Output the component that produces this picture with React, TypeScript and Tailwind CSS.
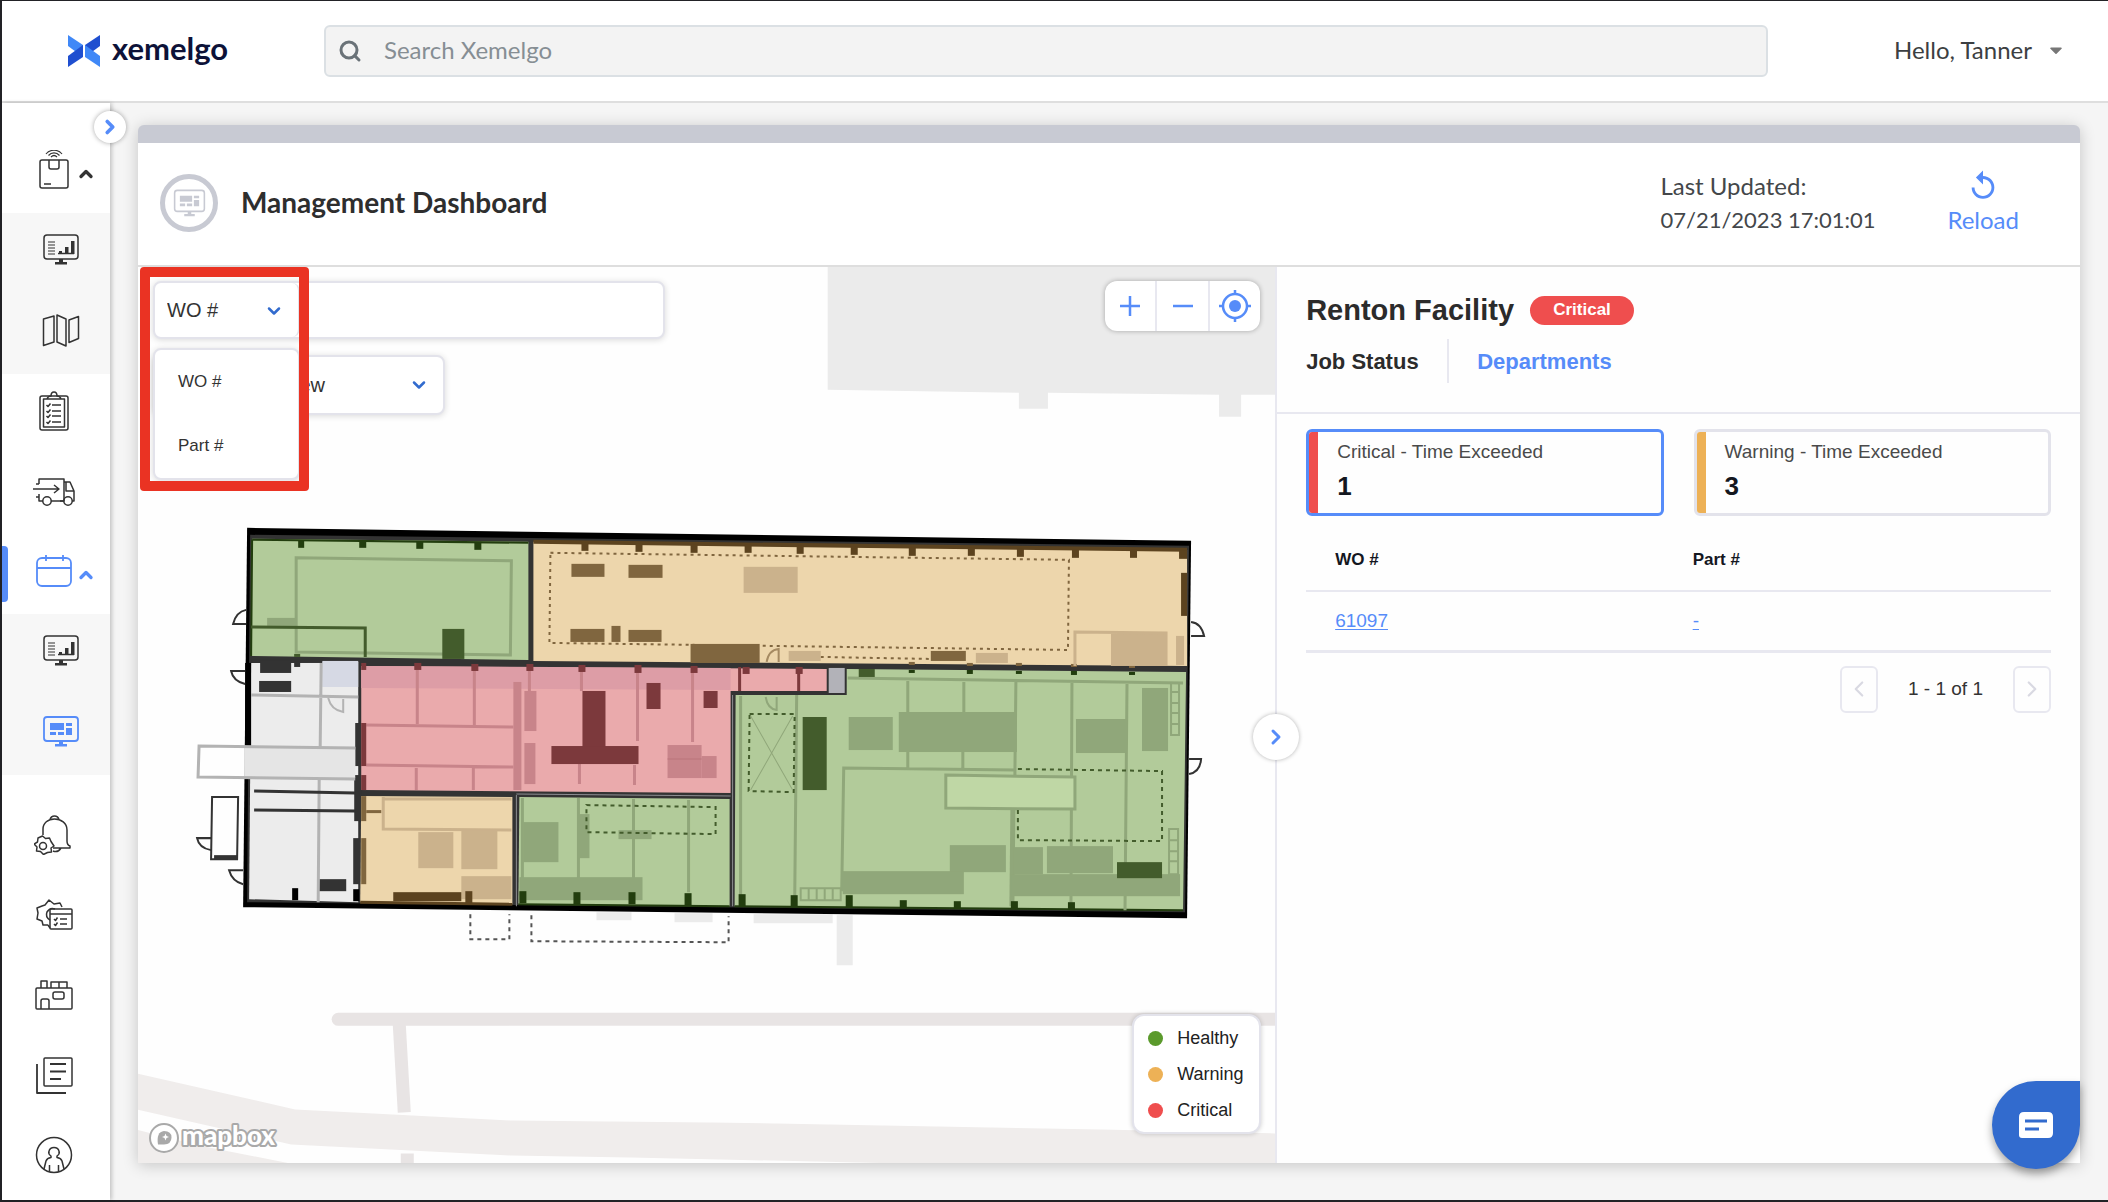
import { ReactNode } from 'react';
import { ChevronDown, ChevronLeft, ChevronRight, ChevronUp, Search } from 'lucide-react';
import { FaCaretDown } from 'react-icons/fa';
import { MdReplay } from 'react-icons/md';

type Rect = [number, number, number, number];

const Rects = ({ fill, items }: { fill: string; items: Rect[] }) => (
  <g fill={fill}>
    {items.map(([x, y, w, h]) => (
      <rect key={`${x}-${y}`} x={x} y={y} width={w} height={h} />
    ))}
  </g>
);

const Icon = ({ children, className = 'h-10 w-10' }: { children: ReactNode; className?: string }) => (
  <svg
    viewBox="0 0 40 40"
    className={className}
    fill="none"
    stroke="currentColor"
    strokeWidth="1.5"
    strokeLinejoin="round"
    aria-hidden="true"
  >
    {children}
  </svg>
);

const PackageIcon = () => (
  <Icon>
    <path d="M12 4c4-5 12-5 16 0M14.500 5.500c3-3.500 8-3.500 11 0M17 7c2-2 4-2 6 0" strokeWidth="1.200" />
    <rect x="6" y="10" width="28" height="28" rx="2" />
    <path d="M15 10v7q0 2 2 2h6q2 0 2-2v-7M10 34h7" />
  </Icon>
);

const ChartMonitorIcon = () => (
  <Icon>
    <rect x="3" y="5" width="34" height="24" rx="3" />
    <path d="M7 12h7M7 15h7M7 18h7M7 21h7M7 24h7" strokeWidth="1.200" />
    <path d="M17 23.500h16" />
    <path d="M18 24v-3h3v3zM24 24v-7h3.500v7zM30 24V11h3.500v13zM18 29h4v3h4v2.500H14V32h4z" fill="currentColor" stroke="none" />
  </Icon>
);

const DashboardMonitorIcon = ({ className }: { className?: string }) => (
  <Icon className={className}>
    <rect x="3" y="5" width="34" height="24" rx="3" strokeWidth="1.800" />
    <path
      d="M9 11h14v7H9zM25 11h6v3h-6zM25 16h6v7h-6zM9 20h6v3H9zM17 20h6v3h-6zM18 29h4v3h4v2.500H14V32h4z"
      fill="currentColor"
      stroke="none"
    />
  </Icon>
);

const MapIcon = () => (
  <Icon>
    <path d="M2.500 8 13 5v26L2.500 34.500zM16 4l9 4v27l-9-4zM28 9l9.500-3.500v22L28 31.500z" />
  </Icon>
);

const ClipboardIcon = () => (
  <Icon>
    <rect x="6" y="5" width="28" height="34" rx="2" />
    <path d="M13 8H9.500v28h21V8H27M13 8q1-3 4-3 0-4 3-4t3 4q3 0 4 3z" />
    <path d="M18 14h9M18 20h9M18 25h9M18 31h9M12.500 14l1.500 1.500 2.500-3M12.500 20l1.500 1.500 2.500-3M12.500 25l1.500 1.500 2.500-3M12.500 31l1.500 1.500 2.500-3" />
  </Icon>
);

const TruckIcon = () => (
  <Icon className="h-10 w-10 overflow-visible">
    <path d="M5 13V8h25v22H17M5 23v7h4M2 13h3M2 26h3" />
    <path d="M-1 18h26M20 14l5 4-5 4" />
    <path d="M30 11h6l4 9v10h-2M32 11v9h8M26 30h4" />
    <circle cx="13" cy="30" r="4.200" />
    <circle cx="34" cy="30" r="4.200" />
  </Icon>
);

const CalendarIcon = () => (
  <Icon>
    <rect x="3" y="7" width="34" height="28" rx="5" strokeWidth="1.800" />
    <path d="M3 17h34M12 4v6M29 4v6" strokeWidth="1.800" />
  </Icon>
);

const BellIcon = () => (
  <Icon>
    <path d="M9 20v-6C9 8 14 4 20.500 4S33 8 33 15v11q0 4 3 5v2H19M16 4.500q1-3.500 4.500-3.500T25 4.500M19 36q5 2 8-3" />
    <path d="m8.500 21 3 2.500 4-.5 1.500 3.500L20 31l-3 2 .5 4-4 .5-4 2-3-3-4-.5.5-4-3-3 3.500-2 .5-4z" />
    <circle cx="9" cy="31" r="3.500" />
  </Icon>
);

const GearListIcon = () => (
  <Icon>
    <path d="M14 30H9l-1-4-5-2 1-6-1-5 5-2 3-1 4-5 5 4 6-1 2 4M14 30l2 3" />
    <path d="M16 25q-5-3-3-8 3-5 8-3" />
    <rect x="16" y="14" width="22" height="20" rx="1" />
    <path d="M16 19h22M26 24h7M26 29h7M20 24l1.500 1.500 2-3M20 29l1.500 1.500 2-3" />
  </Icon>
);

const FactoryIcon = () => (
  <Icon>
    <rect x="2" y="13" width="36" height="21" rx="1" />
    <path d="M7 13V6h6v7M17 13V7h16v6M25 7v6M7 34v-8q0-2 2-2h4q2 0 2 2v8" />
    <rect x="19" y="17" width="11" height="7" rx="2" />
  </Icon>
);

const DocumentsIcon = () => (
  <Icon>
    <rect x="10" y="3" width="28" height="28" rx="1" />
    <path d="M16 9h16M16 16.500h16M16 24h11M3 9v29h29" strokeWidth="1.800" />
  </Icon>
);

const UserIcon = () => (
  <Icon>
    <circle cx="20" cy="20" r="17.500" />
    <path d="M10 34l2-8q1-3 5-3.500V21q-3-2-2-5 1-3.500 5-3.500t5 3.500q1 3-2 5v1.500q4 .5 5 3.500l2 8M15.500 36v-6M24.500 36v-6" />
  </Icon>
);

interface NavItem {
  label: string;
  icon: ReactNode;
  active?: boolean;
  children?: NavItem[];
}

const navItems: NavItem[] = [
  {
    label: 'Tracking',
    icon: <PackageIcon />,
    children: [
      { label: 'Tracking dashboard', icon: <ChartMonitorIcon /> },
      { label: 'Map', icon: <MapIcon /> },
    ],
  },
  { label: 'Orders', icon: <ClipboardIcon /> },
  { label: 'Shipments', icon: <TruckIcon /> },
  {
    label: 'Planning',
    icon: <CalendarIcon />,
    active: true,
    children: [
      { label: 'Planning dashboard', icon: <ChartMonitorIcon /> },
      { label: 'Management dashboard', icon: <DashboardMonitorIcon />, active: true },
    ],
  },
  { label: 'Alerts', icon: <BellIcon /> },
  { label: 'Configuration', icon: <GearListIcon /> },
  { label: 'Facilities', icon: <FactoryIcon /> },
  { label: 'Reports', icon: <DocumentsIcon /> },
  { label: 'Account', icon: <UserIcon /> },
];

const Sidebar = () => (
  <aside className="relative z-10 w-[108px] shrink-0 bg-white shadow-[2px_0_4px_rgba(0,0,0,0.2)]">
    <button
      type="button"
      aria-label="Expand menu"
      className="absolute top-2 -right-4 flex h-8 w-8 items-center justify-center rounded-full bg-white text-[#568cf9] shadow-[0_0_5px_rgba(0,0,0,0.35)]"
    >
      <ChevronRight size={22} strokeWidth={4} />
    </button>
    <nav className="flex flex-col pt-[30px]">
      {navItems.map((item) => (
        <div key={item.label} className={item.active ? 'mb-[23px]' : ''}>
          <a
            href="#"
            aria-label={item.label}
            className={`relative flex h-20 items-center pb-1.5 pl-8 ${item.active ? 'text-[#568cf9]' : 'text-[#333]'}`}
          >
            {item.active && <span className="absolute top-3 left-0 h-14 w-1.5 rounded-r bg-[#568cf9]" />}
            {item.icon}
            {item.children && <ChevronUp size={24} strokeWidth={4} className="mt-2 h-5 w-6" />}
          </a>
          {item.children && (
            <div className="flex flex-col gap-px bg-[#f7f7f7]">
              {item.children.map((child) => (
                <a
                  key={child.label}
                  href="#"
                  aria-label={child.label}
                  className={`flex h-20 items-center pb-1.5 pl-[39px] ${child.active ? 'text-[#568cf9]' : 'text-[#333]'}`}
                >
                  {child.icon}
                </a>
              ))}
            </div>
          )}
        </div>
      ))}
    </nav>
  </aside>
);

const Header = () => (
  <header className="flex h-[102px] items-center border-b-2 border-[#dedede] bg-white pl-[66px] font-['Lato',sans-serif]">
    <a href="#" className="flex w-[256px] shrink-0 items-center gap-3 text-[#0d1238]">
      <svg viewBox="0 0 32 32" className="h-8 w-8" aria-hidden="true">
        <path d="M0 0l15 10v12L0 11z" fill="#4088f7" />
        <path d="M0 32V21L15 10v12z" fill="#1f4fd0" />
        <path d="M32 0v11L17 22V10z" fill="#1f4fd0" />
        <path d="M32 32V21L17 10v12z" fill="#4088f7" />
      </svg>
      <span className="pb-1.5 text-[31px] leading-9 font-bold">xemelgo</span>
    </a>
    <label className="flex h-[52px] flex-1 items-center rounded-md border-2 border-[#dbe0e4] bg-[#f3f3f3] pl-3">
      <Search size={24} strokeWidth={3} className="text-[#6a7278]" />
      <input
        type="search"
        aria-label="Search"
        placeholder="Search Xemelgo"
        className="ml-[22px] flex-1 bg-transparent pb-0.5 text-2xl outline-none placeholder:text-[#868e94]"
      />
    </label>
    <button type="button" className="flex w-[340px] items-center justify-end gap-[14px] pr-[42px] pb-0.5 text-2xl text-[#3c3f42]">
      Hello, Tanner
      <FaCaretDown size={20} className="text-[#777]" />
    </button>
  </header>
);

const FloorPlan = () => (
  <svg
    viewBox="138 267 1136 896"
    preserveAspectRatio="xMidYMid slice"
    className="absolute inset-0 h-full w-full"
    fill="none"
    aria-label="Renton Facility floor plan"
  >
    {/* surroundings */}
    <path d="M827 267h449v128h-36v22h-22v-22l-171-2v16h-29v-16l-191-3z" fill="#ebebeb" />
    <path d="M136 1073l159 36 215 11 200 2 390 7 176 4v30H900l-270-6-120-2-219-11-155-35zM136 1129l63 16 91 18H136z" fill="#f0edec" />
    <path d="M338 1019h938" stroke="#e8e4e4" strokeWidth="13" strokeLinecap="round" />
    <path d="M399 1024l5 88M407 1153v12" stroke="#e8e4e4" strokeWidth="13" />
    <Rects fill="#ebebeb" items={[[596, 912, 35, 8], [674, 913, 38, 9], [753, 914, 79, 9], [836, 915, 16, 50]]} />

    {/* building shell and rooms */}
    <path d="M247 528l943 13-4 377-943-11z" fill="#000" />
    <path d="M250 535l938 11-4 366-937-10z" fill="#333" />
    <path d="M252 539l276 3v118l-277-4z" fill="#b2cb9a" />
    <path d="M533 542l653 8v116l-653-5z" fill="#edd6ac" />
    <path d="M251 663l107-1v240l-109-3z" fill="#ececec" />
    <path d="M361 666l465 3v22h-96v102l-369-3z" fill="#eaaaac" />
    <path d="M828 668h16v25h-16z" fill="#b2b2b8" />
    <path d="M361 796l151 1v107l-152-2z" fill="#edd6ac" />
    <path d="M519 797l210 2v107l-211-2z" fill="#b2cb9a" />
    <path d="M735 695h111v-26l339 3-3 238-448-4z" fill="#b2cb9a" />
    <path d="M516 795v111M516 794l214 2M732 695v211" stroke="#8d8d92" />

    {/* north-west room */}
    <path d="M252 540l276 3M252 540l-1 116" stroke="#223d0e" strokeWidth="2" />
    <path d="M296 558l215 3-1 94-214-3z" stroke="#90a77a" strokeWidth="3" />
    <Rects fill="#90a77a" items={[[267, 618, 28, 8]]} />
    <path d="M251 627l114 1v29" stroke="#435c2c" strokeWidth="3" />
    <Rects fill="#435c2c" items={[[442, 629, 22, 30], [294, 654, 6, 3]]} />
    <Rects fill="#223d0e" items={[[298, 541, 6, 7], [359, 541, 7, 7], [416, 542, 7, 7], [474, 542, 7, 8]]} />

    {/* north-east room */}
    <path d="M533 542l653 8" stroke="#5c431f" strokeWidth="4" />
    <Rects
      fill="#5c431f"
      items={[
        [581, 543, 7, 8], [635, 544, 7, 8], [690, 545, 7, 8], [744, 545, 7, 8], [796, 546, 7, 8], [850, 547, 7, 8],
        [908, 548, 7, 8], [967, 548, 7, 8], [1016, 549, 7, 8], [1071, 550, 7, 8], [1129, 550, 7, 8],
        [1178, 551, 8, 8], [1180, 573, 6, 43],
      ]}
    />
    <path d="M550 553l518 7-1 90-518-7z" stroke="#80663f" strokeWidth="2" strokeDasharray="3 4" />
    <path d="M820 657l110 2" stroke="#80663f" strokeWidth="2" strokeDasharray="3 4" />
    <Rects
      fill="#80663f"
      items={[
        [571, 564, 33, 13], [628, 565, 34, 13], [570, 629, 34, 13], [611, 626, 9, 16], [628, 630, 33, 12],
        [690, 644, 69, 19], [930, 651, 35, 10], [908, 662, 6, 3], [966, 663, 6, 3], [1015, 663, 6, 3],
        [1070, 664, 6, 3], [1128, 665, 6, 3],
      ]}
    />
    <Rects fill="#cbb28c" items={[[743, 567, 54, 26], [788, 651, 32, 10], [975, 653, 32, 10], [1110, 634, 54, 32], [1175, 636, 8, 29]]} />
    <path d="M1074 666v-34l91 1v33" stroke="#cbb28c" strokeWidth="3" />
    <path d="M766 662q2-12 12-13v13" stroke="#a58a62" strokeWidth="2" />

    {/* west hall */}
    <Rects fill="#d6d9e4" items={[[322, 661, 36, 26]]} />
    <Rects
      fill="#333"
      items={[
        [251, 660, 71, 3], [260, 661, 31, 12], [259, 681, 32, 11], [294, 662, 6, 5], [355, 723, 6, 43],
        [354, 775, 7, 46], [353, 838, 7, 46], [318, 879, 28, 12],
      ]}
    />
    <Rects fill="#000" items={[[292, 888, 6, 12], [353, 889, 6, 12], [245, 663, 6, 84]]} />
    <Rects fill="#e5e5e5" items={[[244, 747, 111, 31]]} />
    <path d="M355 748l-156-2-1 31 157 2" stroke="#b3b3b3" strokeWidth="3" />
    <path d="M251 695l107 2M321 663l-1 84M319 780l-1 122" stroke="#b3b3b3" strokeWidth="3" />
    <path d="M328 698q3 12 15 14v-13" stroke="#b3b3b3" strokeWidth="2" />
    <path d="M254 791l101 2M254 810l101 1" stroke="#333" strokeWidth="3" />

    {/* assembly area */}
    <path d="M361 666l369 2v22l-369-2z" fill="#dd9da6" />
    <path
      d="M417 670v54M474 670v55M416 766v24M473 766v24M529 670v21M581 670v21M637 670v71M692 670v72M366 725l147 2M366 765l147 2M579 764v20M634 765v20"
      stroke="#c8848a"
      strokeWidth="3"
    />
    <Rects fill="#c8848a" items={[[513, 682, 8, 108], [524, 691, 12, 40], [524, 743, 11, 41], [667, 745, 34, 33], [701, 756, 15, 22]]} />
    <path d="M667 759h34" stroke="#b9757b" />
    <path d="M739 667v24M798 667v24" stroke="#7c393c" strokeWidth="3" />
    <Rects
      fill="#7c393c"
      items={[
        [361, 663, 5, 7], [414, 663, 7, 7], [471, 664, 7, 7], [526, 664, 7, 7], [578, 665, 7, 7], [634, 665, 7, 8],
        [690, 666, 7, 7], [742, 667, 7, 7], [795, 667, 7, 7], [582, 691, 23, 57], [551, 746, 87, 18],
        [646, 683, 14, 26], [703, 691, 14, 17], [361, 723, 5, 43], [361, 775, 5, 15],
      ]}
    />

    {/* south-west room */}
    <path d="M383 797v32l128 1M383 799h128" stroke="#cbb28c" strokeWidth="3" />
    <Rects fill="#cbb28c" items={[[418, 832, 35, 36], [461, 830, 36, 39], [461, 876, 50, 23]]} />
    <Rects fill="#80663f" items={[[361, 796, 5, 25], [361, 838, 5, 46], [366, 810, 15, 3]]} />
    <Rects fill="#5c431f" items={[[393, 892, 68, 9], [465, 891, 7, 12]]} />
    <path d="M360 902l152 2" stroke="#5c431f" strokeWidth="3" />

    {/* south room */}
    <path d="M522 798v80M578 798v80M633 799v92M688 800v92" stroke="#90a77a" strokeWidth="3" />
    <Rects fill="#90a77a" items={[[523, 822, 35, 40], [579, 814, 10, 44], [618, 830, 33, 9], [519, 877, 123, 23]]} />
    <path d="M586 805l129 2v27l-129-2z" stroke="#435c2c" strokeWidth="2" strokeDasharray="4 4" />
    <Rects fill="#223d0e" items={[[519, 891, 7, 12], [573, 892, 7, 12], [628, 892, 7, 12], [684, 893, 7, 12]]} />
    <path d="M518 904l211 2M734 906l448 4" stroke="#223d0e" strokeWidth="2" />

    {/* east hall */}
    <path
      d="M847 678l335 5M740 696v209M796 695l-2 210M907 681v31M907 752v16M963 682v30M962 752v17M1015 682l-1 93M1071 683l-1 224M1126 684l-2 226M1015 770l-172-2-2 123"
      stroke="#90a77a"
      strokeWidth="3"
    />
    <path d="M1012 809l-1 97" stroke="#90a77a" strokeWidth="5" />
    <Rects
      fill="#90a77a"
      items={[
        [848, 717, 44, 33], [898, 712, 118, 40], [1075, 719, 51, 34], [1141, 688, 26, 63], [949, 845, 56, 27],
        [1013, 847, 29, 27], [1046, 846, 66, 27], [842, 871, 121, 23], [1011, 874, 168, 22],
      ]}
    />
    <path d="M945 775l129 2v32l-129-1z" fill="#bfd7a5" stroke="#90a77a" strokeWidth="3" />
    <path d="M1017 769l144 2v70l-144-1v-30M749 714h45l-1 78-45-1z" stroke="#435c2c" strokeWidth="2" strokeDasharray="4 4" />
    <path d="M750 716l42 74M792 716l-42 74" stroke="#90a77a" />
    <path d="M765 697q2 12 11 13v-13" stroke="#90a77a" strokeWidth="2" />
    <path
      d="M1170 683h8v52h-8zM1170 692h8M1170 703h8M1170 713h8M1170 724h8M1168 829h9v45h-9zM1168 840h9M1168 851h9M1168 861h9M800 888h40v12h-40zM808 888v12M816 888v12M824 888v12M832 888v12"
      stroke="#90a77a"
      strokeWidth="2"
    />
    <Rects fill="#435c2c" items={[[802, 717, 24, 73], [1116, 862, 45, 16], [858, 669, 16, 8]]} />
    <Rects
      fill="#223d0e"
      items={[
        [738, 894, 7, 12], [790, 895, 7, 12], [845, 895, 7, 12], [899, 900, 7, 8], [953, 901, 7, 8], [1010, 901, 7, 8],
        [1067, 902, 7, 8], [908, 670, 6, 3], [966, 670, 6, 4], [1015, 671, 6, 3], [1070, 671, 6, 4], [1128, 672, 6, 3],
      ]}
    />

    {/* doors and docks */}
    <g stroke="#333" strokeWidth="2">
      <path d="M246 610q-10 2-13 14h13M245 671h-14q2 10 14 13M211 838h-14q2 10 14 12M243 870h-14q3 11 14 14" />
      <path d="M1190 622q10 1 13 14h-13M1188 759h12q-1 13-12 15" />
      <path d="M212 797h26l-1 62h-26z" />
      <path d="M214 857h23" strokeWidth="4" />
      <path d="M470 914v25h39v-25M531 915v26l197 1v-26" stroke="#555" strokeDasharray="4 4" />
    </g>
  </svg>
);

const MapboxLogo = () => (
  <a href="#" className="absolute bottom-[7px] left-[9px] flex items-center">
    <svg viewBox="0 0 132 36" className="h-9 w-[132px]" aria-label="mapbox">
      <circle cx="17" cy="18" r="14" fill="#fff" stroke="#a9a9a9" strokeWidth="2" />
      <path d="M11 24.500q-2-12.500 6-13.500 7.500 0 7.500 6.500t-7.500 7z" fill="#a9a9a9" />
      <path d="M18.500 13.500l1 2.500 2.500 1-2.500 1-1 2.500-1-2.500-2.500-1 2.500-1z" fill="#fff" />
      <text
        x="35"
        y="25"
        fill="#fff"
        stroke="#a9a9a9"
        strokeWidth="4"
        strokeLinejoin="round"
        paintOrder="stroke"
        className="font-['Lato',sans-serif] text-[26px] font-black"
      >
        mapbox
      </text>
    </svg>
  </a>
);

const legend = [
  { label: 'Healthy', dot: 'bg-[#5b9a2c]' },
  { label: 'Warning', dot: 'bg-[#edb156]' },
  { label: 'Critical', dot: 'bg-[#ef4e4e]' },
];

const MapPanel = () => (
  <section className="relative bg-[#fefefe]">
    <div className="absolute inset-0 overflow-hidden">
      <FloorPlan />
    </div>
    <MapboxLogo />

    <div className="relative flex items-start justify-between py-[14px] pr-[15px] pl-[15px]">
      <div className="flex flex-col gap-4">
        <div className="flex h-[58px] w-[512px] rounded-lg border-2 border-[#e3e3eb] bg-white text-xl text-[#333] shadow-[0_1px_6px_rgba(0,0,0,0.15)]">
          <div className="relative w-[145px] shrink-0">
            <select
              aria-label="Search by"
              className="h-full w-full appearance-none rounded-lg border-r-2 border-[#e3e3eb] bg-transparent pl-3 outline-none"
            >
              <option>WO #</option>
              <option>Part #</option>
            </select>
            <ChevronDown size={20} strokeWidth={3} className="pointer-events-none absolute top-[18px] right-4 text-[#326bce]" />
            <ul className="absolute top-[65px] -left-0.5 z-10 w-[147px] rounded-lg border-2 border-[#e3e3eb] bg-white text-[17px] shadow-[0_1px_6px_rgba(0,0,0,0.15)]">
              <li className="flex h-16 items-center pl-[23px]">WO #</li>
              <li className="flex h-16 items-center pl-[23px]">Part #</li>
            </ul>
          </div>
          <input type="text" aria-label="Search value" className="min-w-0 flex-1 bg-transparent px-3 outline-none" />
        </div>
        <div className="relative h-[60px] w-[292px]">
          <select
            aria-label="View"
            className="h-full w-full appearance-none rounded-lg border-2 border-[#e3e3eb] bg-white pl-[17px] text-xl text-[#333] shadow-[0_1px_6px_rgba(0,0,0,0.15)] outline-none"
          >
            <option>Department View</option>
          </select>
          <ChevronDown size={20} strokeWidth={3} className="pointer-events-none absolute top-5 right-4 text-[#326bce]" />
        </div>
      </div>

      <div className="flex h-[50px] w-[155px] divide-x-2 divide-[#e8e8f0] rounded-xl bg-white text-[#568cf9] shadow-[0_0_5px_rgba(0,0,0,0.3)]">
        <button type="button" aria-label="Zoom in" className="flex flex-1 items-center justify-center">
          <svg viewBox="0 0 32 32" className="h-8 w-8" stroke="currentColor" strokeWidth="2.500">
            <path d="M6 16h20M16 6v20" />
          </svg>
        </button>
        <button type="button" aria-label="Zoom out" className="flex flex-1 items-center justify-center">
          <svg viewBox="0 0 32 32" className="h-8 w-8" stroke="currentColor" strokeWidth="2.500">
            <path d="M6 16h20" />
          </svg>
        </button>
        <button type="button" aria-label="Recenter" className="flex flex-1 items-center justify-center">
          <svg viewBox="0 0 32 32" className="h-8 w-8" fill="none" stroke="currentColor" strokeWidth="2.500">
            <circle cx="16" cy="16" r="12" />
            <circle cx="16" cy="16" r="6" fill="currentColor" stroke="none" />
            <path d="M16 0v5M16 27v5M0 16h5M27 16h5" />
          </svg>
        </button>
      </div>
    </div>

    {/* highlight around the search type menu */}
    <div className="pointer-events-none absolute top-0 left-0.5 z-20 h-[224px] w-[169px] rounded border-10 border-[#ea3323]" />

    <ul className="absolute right-[14px] bottom-[29px] flex w-[129px] flex-col rounded-xl border-2 border-[#e3e3eb] bg-white py-1 pl-[14px] shadow-[0_0_5px_rgba(0,0,0,0.2)]">
      {legend.map((item) => (
        <li key={item.label} className="flex h-9 items-center gap-[14px] text-lg text-[#222]">
          <span className={`h-[15px] w-[15px] rounded-full ${item.dot}`} />
          {item.label}
        </li>
      ))}
    </ul>
  </section>
);

const stats = [
  { label: 'Critical - Time Exceeded', value: 1, border: 'border-[#568cf9]', bar: 'bg-[#ef4e4e]' },
  { label: 'Warning - Time Exceeded', value: 3, border: 'border-[#e3e3eb]', bar: 'bg-[#edb156]' },
];

const FacilityPanel = () => (
  <section className="relative border-l-2 border-[#e8e8f0] bg-[#fefefe]">
    <button
      type="button"
      aria-label="Collapse panel"
      className="absolute top-[447px] -left-6 flex h-[46px] w-[46px] items-center justify-center rounded-full bg-white text-[#568cf9] shadow-[0_0_4px_rgba(0,0,0,0.3)]"
    >
      <ChevronRight size={24} strokeWidth={3} />
    </button>

    <div className="h-[147px] border-b-2 border-[#e8e8f0] pt-[22px] pl-[29px]">
      <div className="flex h-11 items-center gap-4">
        <h2 className="text-[29px] font-bold text-[#2b2b2b]">Renton Facility</h2>
        <span className="mb-0.5 flex h-[29px] w-[104px] items-center justify-center rounded-full bg-[#ef4e4e] text-[17px] font-bold text-white">
          Critical
        </span>
      </div>
      <div className="mt-1.5 flex items-center text-[22px] font-bold">
        <button type="button" className="h-11 w-[143px] border-r-2 border-[#e8e8f0] text-left text-[#2b2b2b]">
          Job Status
        </button>
        <button type="button" className="h-11 pl-7 text-[#568cf9]">
          Departments
        </button>
      </div>
    </div>

    <div className="pt-[15px] pr-[29px] pl-[29px]">
      <div className="grid grid-cols-2 gap-[30px]">
        {stats.map((stat) => (
          <button
            key={stat.label}
            type="button"
            className={`flex h-[87px] overflow-hidden rounded-md border-3 text-left ${stat.border}`}
          >
            <span className={`h-full w-[9px] ${stat.bar}`} />
            <span className="flex flex-col gap-0.5 pt-1.5 pl-[19px]">
              <span className="text-[19px] leading-7 text-[#4a4a4a]">{stat.label}</span>
              <span className="text-[26px] leading-9 font-bold text-[#14171f]">{stat.value}</span>
            </span>
          </button>
        ))}
      </div>

      <table className="mt-[14px] w-full table-fixed text-left">
        <thead>
          <tr className="h-[61px] border-b-2 border-[#e8e8f0] text-[17px] text-[#14171f]">
            <th className="w-[48%] pl-[29px] font-bold">WO #</th>
            <th className="pl-[29px] font-bold">Part #</th>
          </tr>
        </thead>
        <tbody>
          <tr className="h-[60px] border-b-3 border-[#e8e8f0] text-[19px] text-[#568cf9]">
            <td className="pl-[29px]">
              <a href="#" className="underline underline-offset-2">61097</a>
            </td>
            <td className="pl-[29px]">
              <a href="#" className="underline underline-offset-2">-</a>
            </td>
          </tr>
        </tbody>
      </table>

      <div className="mt-[13px] flex items-center justify-end gap-[30px] text-[19px] text-[#333]">
        <button
          type="button"
          aria-label="Previous page"
          className="flex h-[47px] w-[38px] items-center justify-center rounded-md border-2 border-[#e8e8f0] text-[#d9d9e2]"
        >
          <ChevronLeft size={26} />
        </button>
        <span>1 - 1 of 1</span>
        <button
          type="button"
          aria-label="Next page"
          className="flex h-[47px] w-[38px] items-center justify-center rounded-md border-2 border-[#e8e8f0] text-[#d9d9e2]"
        >
          <ChevronRight size={26} />
        </button>
      </div>
    </div>
  </section>
);

const ChatButton = () => (
  <button
    type="button"
    aria-label="Open chat"
    className="fixed right-7 bottom-[33px] z-30 flex h-[88px] w-[88px] items-center justify-center rounded-full rounded-tr-xl bg-[#326bce] shadow-[0_5px_8px_rgba(0,0,0,0.35)]"
  >
    <svg viewBox="0 0 34 26" className="h-[26px] w-[34px]" aria-hidden="true">
      <path d="M5 0h24q5 0 5 5v16q0 5-5 5H3q-3 0-3-3V5q0-5 5-5z" fill="#fff" />
      <path d="M6 9h22M6 17h14" stroke="#326bce" strokeWidth="3" />
    </svg>
  </button>
);

const App = () => {
  return (
    <div className="flex min-h-screen flex-col border-t border-b-2 border-l-2 border-[#222226] bg-[#f5f5f5] font-['Liberation_Sans',Arial,sans-serif]">
      <Header />
      <div className="flex flex-1">
        <Sidebar />
        <main className="flex flex-1 pt-[22px] pr-7 pb-[37px] pl-7">
          <div className="flex flex-1 flex-col rounded-t-md border-t-[18px] border-[#c8cad3] bg-white shadow-[0_2px_16px_rgba(0,0,0,0.2)]">
            <div className="flex h-[124px] items-center border-b-2 border-[#dedede] pb-0.5 pl-[22px] font-['Lato',sans-serif]">
              <div className="flex h-[58px] w-[58px] items-center justify-center rounded-full border-5 border-[#c8cad3] text-[#c8cad3]">
                <DashboardMonitorIcon className="h-[35px] w-[35px]" />
              </div>
              <h1 className="ml-[23px] pb-0.5 text-[28px] font-bold text-[#2e2e2e]">Management Dashboard</h1>
              <p className="ml-auto w-[218px] text-2xl leading-[34px] text-[#44474a]">
                Last Updated:
                <span className="block text-[22px] leading-[34px]">07/21/2023 17:01:01</span>
              </p>
              <button type="button" className="mr-[61px] ml-[69px] flex flex-col items-center text-2xl leading-[34px] text-[#568cf9]">
                <MdReplay size={34} />
                Reload
              </button>
            </div>
            <div className="grid flex-1 grid-cols-[1136fr_804fr]">
              <MapPanel />
              <FacilityPanel />
            </div>
          </div>
        </main>
      </div>
      <ChatButton />
    </div>
  );
};

export default App;
